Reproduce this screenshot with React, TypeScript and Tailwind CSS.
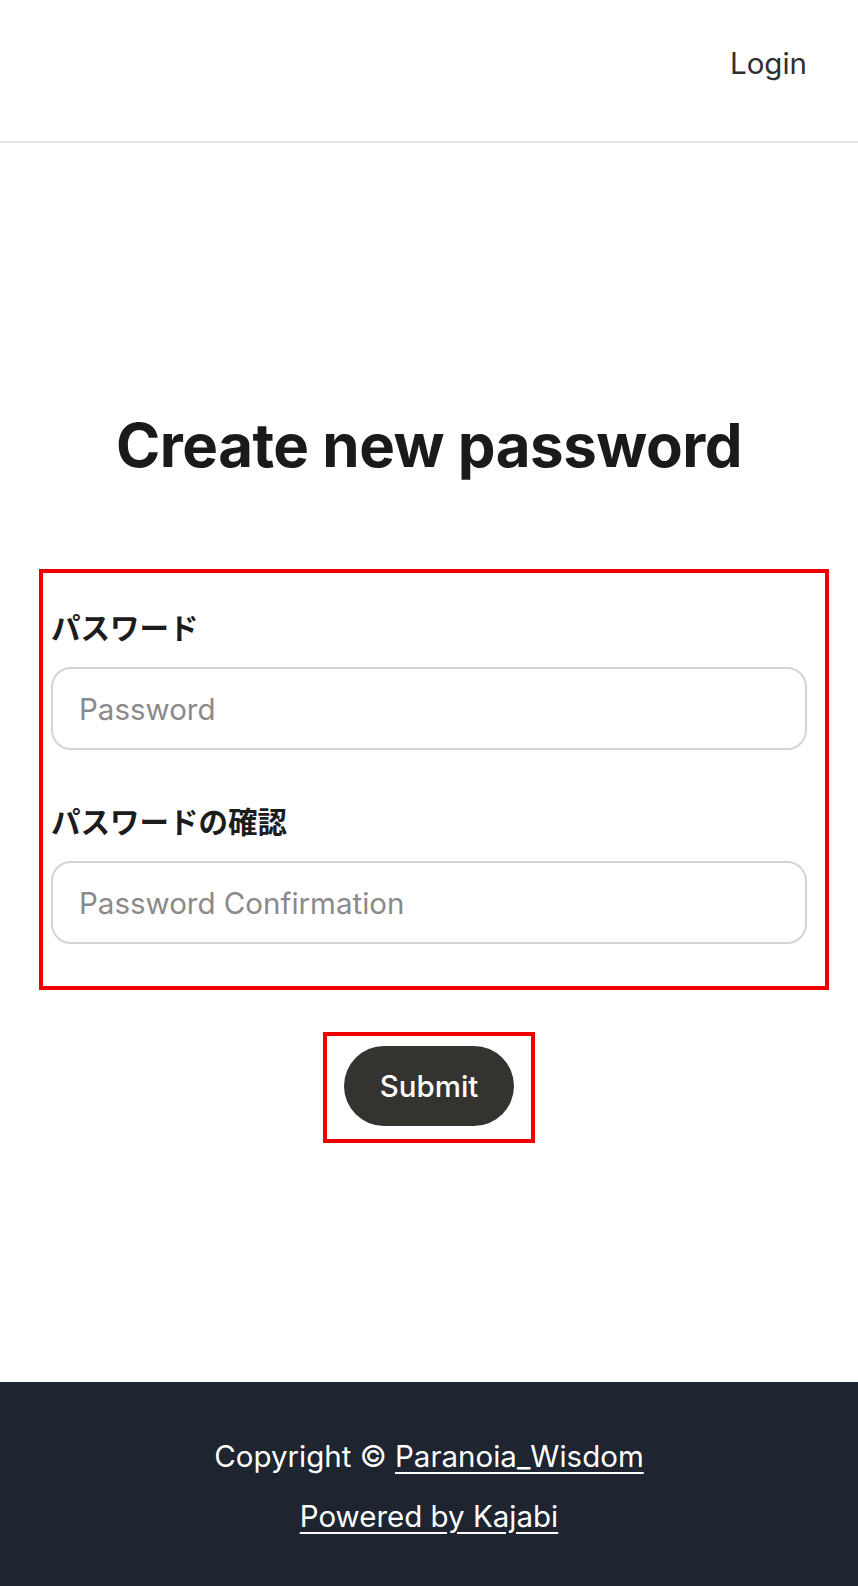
import React from "react";

const font = { fontFamily: 'Inter, "Noto Sans CJK JP", sans-serif' };

function Field({ label, placeholder, first }: { label: string; placeholder: string; first?: boolean }) {
  return (
    <div className={first ? "" : "mt-[54px]"}>
      <label className="block text-[29.5px] leading-[36px] font-semibold text-[#1c1c1c]">{label}</label>
      <input
        type="password"
        placeholder={placeholder}
        className="mt-[21px] block w-full h-[83px] rounded-[20px] border-2 border-[#d4d4d4] bg-white pl-[26px] text-[29.5px] text-[#222] placeholder:text-[#8a8a8a] outline-none"
      />
    </div>
  );
}

export default function App() {
  return (
    <div className="min-h-screen bg-white flex flex-col" style={font}>
      <header className="h-[143px] border-b-2 border-[#e6e6e6] flex justify-end items-start pt-[45px] pr-[51px]">
        <a className="text-[29.5px] leading-[36px] text-[#2f2f2f]">Login</a>
      </header>

      <main className="px-[51px]">
        <h1 className="mt-[266px] text-center text-[60px] leading-[72px] font-bold text-[#1a1a1a] tracking-[-0.5px]">
          Create new password
        </h1>

        <form className="relative mt-[88px] pt-[41px] pb-[46px]">
          <div className="absolute top-0 bottom-0 left-[-12px] right-[-22px] border-4 border-[#ee0000] pointer-events-none" />
          <Field first label="パスワード" placeholder="Password" />
          <Field label="パスワードの確認" placeholder="Password Confirmation" />
        </form>

        <div className="mt-[56px] flex justify-center">
          <div className="relative">
            <div className="absolute top-[-14px] bottom-[-17px] left-[-21px] right-[-21px] border-4 border-[#ee0000] pointer-events-none" />
            <button className="h-[80px] w-[170px] rounded-full bg-[#353330] text-white text-[29.5px] font-medium">
              Submit
            </button>
          </div>
        </div>
      </main>

      <footer className="mt-auto bg-[#1e2430] h-[204px] pt-[56px] flex flex-col items-center gap-[24px] text-white text-[29.5px] leading-[36px]">
        <p>
          Copyright © <a className="underline underline-offset-[5px]">Paranoia_Wisdom</a>
        </p>
        <a className="underline underline-offset-[5px]">Powered by Kajabi</a>
      </footer>
    </div>
  );
}
